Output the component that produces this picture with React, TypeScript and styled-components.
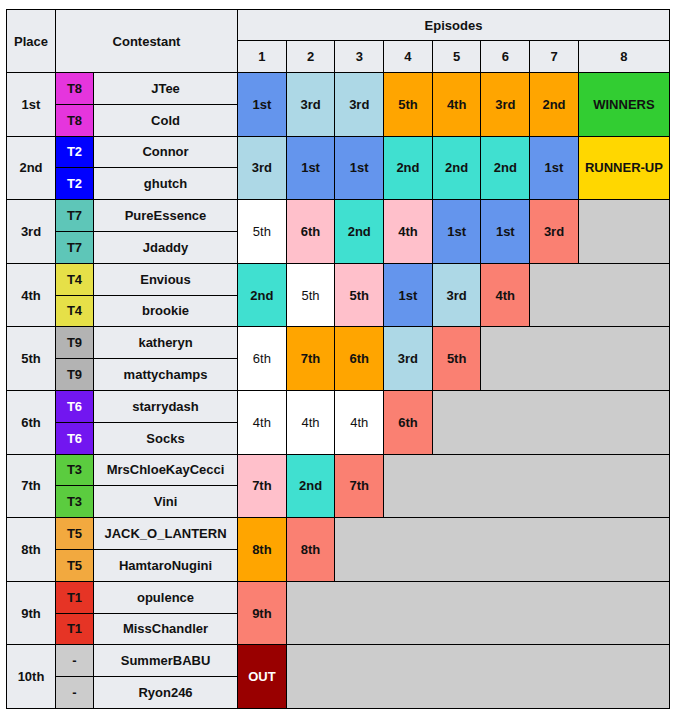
import React from "react";
import styled, { createGlobalStyle } from "styled-components";

type Result = { text: string; color: string; light?: boolean; span?: number };

type Entry = {
  place: string;
  team: string;
  teamColor: string;
  teamLight?: boolean;
  names: [string, string];
  results: Result[];
};

const C = {
  first: "#6495ED",
  top: "#ADD8E6",
  mid: "#FFA500",
  safe: "#40E0D0",
  low: "#FFC0CB",
  out: "#FA8072",
  white: "#FFFFFF",
  grey: "#CCCCCC",
  win: "#32CD32",
  runner: "#FFD700",
  gone: "#990000",
};

const r = (text: string, color: string, light = false): Result => ({ text, color, light });
const blank = (span: number): Result => ({ text: "", color: C.grey, span });

const entries: Entry[] = [
  {
    place: "1st",
    team: "T8",
    teamColor: "#E535DD",
    names: ["JTee", "Cold"],
    results: [
      r("1st", C.first),
      r("3rd", C.top),
      r("3rd", C.top),
      r("5th", C.mid),
      r("4th", C.mid),
      r("3rd", C.mid),
      r("2nd", C.mid),
      r("WINNERS", C.win),
    ],
  },
  {
    place: "2nd",
    team: "T2",
    teamColor: "#0000FF",
    teamLight: true,
    names: ["Connor", "ghutch"],
    results: [
      r("3rd", C.top),
      r("1st", C.first),
      r("1st", C.first),
      r("2nd", C.safe),
      r("2nd", C.safe),
      r("2nd", C.safe),
      r("1st", C.first),
      r("RUNNER-UP", C.runner),
    ],
  },
  {
    place: "3rd",
    team: "T7",
    teamColor: "#5EC6B8",
    names: ["PureEssence", "Jdaddy"],
    results: [
      r("5th", C.white),
      r("6th", C.low),
      r("2nd", C.safe),
      r("4th", C.low),
      r("1st", C.first),
      r("1st", C.first),
      r("3rd", C.out),
      blank(1),
    ],
  },
  {
    place: "4th",
    team: "T4",
    teamColor: "#E6E048",
    names: ["Envious", "brookie"],
    results: [
      r("2nd", C.safe),
      r("5th", C.white),
      r("5th", C.low),
      r("1st", C.first),
      r("3rd", C.top),
      r("4th", C.out),
      blank(2),
    ],
  },
  {
    place: "5th",
    team: "T9",
    teamColor: "#B3B3B3",
    names: ["katheryn", "mattychamps"],
    results: [
      r("6th", C.white),
      r("7th", C.mid),
      r("6th", C.mid),
      r("3rd", C.top),
      r("5th", C.out),
      blank(3),
    ],
  },
  {
    place: "6th",
    team: "T6",
    teamColor: "#7216F0",
    teamLight: true,
    names: ["starrydash", "Socks"],
    results: [r("4th", C.white), r("4th", C.white), r("4th", C.white), r("6th", C.out), blank(4)],
  },
  {
    place: "7th",
    team: "T3",
    teamColor: "#5BCC3F",
    names: ["MrsChloeKayCecci", "Vini"],
    results: [r("7th", C.low), r("2nd", C.safe), r("7th", C.out), blank(5)],
  },
  {
    place: "8th",
    team: "T5",
    teamColor: "#F2A93F",
    names: ["JACK_O_LANTERN", "HamtaroNugini"],
    results: [r("8th", C.mid), r("8th", C.out), blank(6)],
  },
  {
    place: "9th",
    team: "T1",
    teamColor: "#E63425",
    names: ["opulence", "MissChandler"],
    results: [r("9th", C.out), blank(7)],
  },
  {
    place: "10th",
    team: "-",
    teamColor: "#CCCCCC",
    names: ["SummerBABU", "Ryon246"],
    results: [r("OUT", C.gone, true), blank(7)],
  },
];

const episodes = [1, 2, 3, 4, 5, 6, 7, 8];

function App() {
  return (
    <>
      <GlobalStyle />
      <StyledPage>
        <StyledTable>
          <colgroup>
            <col style={{ width: 49 }} />
            <col style={{ width: 38 }} />
            <col style={{ width: 144 }} />
            {episodes.slice(0, 7).map((ep) => (
              <col key={ep} style={{ width: 48.7 }} />
            ))}
            <col style={{ width: 91 }} />
          </colgroup>
          <thead>
            <StyledHeadRow $height={31}>
              <StyledHead rowSpan={2}>Place</StyledHead>
              <StyledHead rowSpan={2} colSpan={2}>
                Contestant
              </StyledHead>
              <StyledHead colSpan={8}>Episodes</StyledHead>
            </StyledHeadRow>
            <StyledHeadRow $height={32}>
              {episodes.map((ep) => (
                <StyledHead key={ep}>{ep}</StyledHead>
              ))}
            </StyledHeadRow>
          </thead>
          <tbody>
            {entries.map((entry) =>
              entry.names.map((name, i) => (
                <StyledRow key={name}>
                  {i === 0 && <StyledCell rowSpan={2}>{entry.place}</StyledCell>}
                  <StyledTeam $bg={entry.teamColor} $light={entry.teamLight}>
                    {entry.team}
                  </StyledTeam>
                  <StyledCell>{name}</StyledCell>
                  {i === 0 &&
                    entry.results.map((res, j) => (
                      <StyledResult
                        key={j}
                        rowSpan={2}
                        colSpan={res.span}
                        $bg={res.color}
                        $light={res.light}
                        $plain={res.color === C.white}
                      >
                        {res.text}
                      </StyledResult>
                    ))}
                </StyledRow>
              ))
            )}
          </tbody>
        </StyledTable>
      </StyledPage>
    </>
  );
}

export default App;

const GlobalStyle = createGlobalStyle`
  body {
    margin: 0;
    background: #ffffff;
    font-family: "Liberation Sans", Arial, sans-serif;
  }
`;

const StyledPage = styled.div`
  padding: 9px 6px;
`;

const StyledTable = styled.table`
  width: 664px;
  table-layout: fixed;
  border-collapse: collapse;
  border: 1px solid #000000;

  font-size: 13px;
  font-weight: bold;
  color: #111111;
  text-align: center;
`;

const StyledHeadRow = styled.tr<{ $height: number }>`
  height: ${({ $height }) => $height}px;
`;

const StyledHead = styled.th`
  padding: 0;

  background-color: #eaecf0;
  border: 1px solid #000000;
`;

const StyledRow = styled.tr`
  height: 31.8px;
`;

const StyledCell = styled.td`
  padding: 0;

  background-color: #eaecf0;
  border: 1px solid #000000;
`;

const StyledTeam = styled.td<{ $bg: string; $light?: boolean }>`
  padding: 0;

  color: ${({ $light }) => ($light ? "#ffffff" : "#111111")};
  background-color: ${({ $bg }) => $bg};
  border: 1px solid #000000;
`;

const StyledResult = styled.td<{ $bg: string; $light?: boolean; $plain?: boolean }>`
  padding: 0;

  font-weight: ${({ $plain }) => ($plain ? "normal" : "bold")};
  color: ${({ $light }) => ($light ? "#ffffff" : "#111111")};
  background-color: ${({ $bg }) => $bg};
  border: 1px solid #000000;
`;
